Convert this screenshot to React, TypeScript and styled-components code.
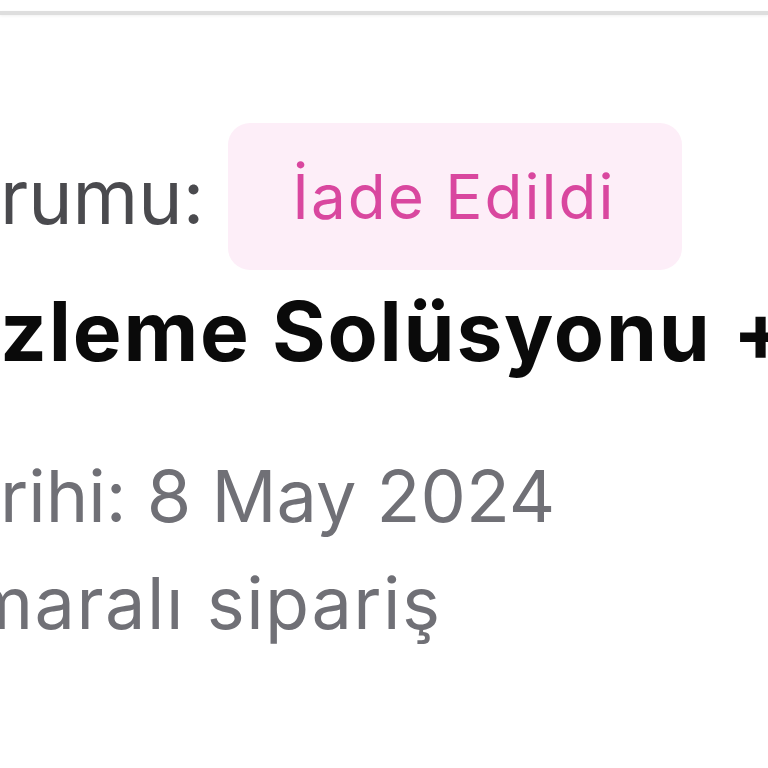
import styled, { createGlobalStyle } from "styled-components";

const GlobalStyle = createGlobalStyle`
  html, body {
    margin: 0;
    padding: 0;
    background: #ffffff;
    overflow: hidden;
  }
  body {
    font-family: "Inter", "Noto Sans", sans-serif;
  }
`;

const Page = styled.div`
  width: 768px;
  height: 768px;
  overflow: hidden;
  padding-top: 11px;
  box-sizing: border-box;
`;

const Divider = styled.div`
  height: 4px;
  background: #dedede;
  box-shadow: 0 1px 3px rgba(0, 0, 0, 0.06);
`;

const Details = styled.div`
  padding-top: 108px;
  display: flex;
  flex-direction: column;
`;

const StatusRow = styled.div`
  display: flex;
  align-items: center;
  gap: 24px;
`;

const Label = styled.span`
  font-size: 75px;
  color: #4a4a4e;
  line-height: 1;
`;

const Badge = styled.span`
  display: flex;
  align-items: center;
  height: 147px;
  padding: 0 66px 0 64px;
  border-radius: 22px;
  background: #fdeef8;
  color: #d9479f;
  font-size: 62px;
  letter-spacing: 2px;
  line-height: 1;
`;

const Title = styled.h2`
  margin: 21px 0 0;
  font-size: 82px;
  font-weight: 700;
  color: #0a0a0a;
  line-height: 1;
  white-space: nowrap;
  letter-spacing: 1.8px;
`;

const Meta = styled.p<{ $top: number; $shift?: number; $spacing?: number }>`
  margin: ${(p) => p.$top}px 0 0 ${(p) => p.$shift ?? 0}px;
  font-size: 72px;
  color: #707076;
  line-height: 1;
  white-space: nowrap;
  letter-spacing: ${(p) => p.$spacing ?? 0}px;
`;

export default function App() {
  return (
    <>
      <GlobalStyle />
      <Page>
        <Divider />
        <Details>
          <StatusRow>
            <Label>rumu:</Label>
            <Badge>İade Edildi</Badge>
          </StatusRow>
          <Title>zleme Solüsyonu +</Title>
          <Meta $top={87}>rihi: 8 May 2024</Meta>
          <Meta $top={35} $shift={-30} $spacing={1.5}>maralı sipariş</Meta>
        </Details>
      </Page>
    </>
  );
}
